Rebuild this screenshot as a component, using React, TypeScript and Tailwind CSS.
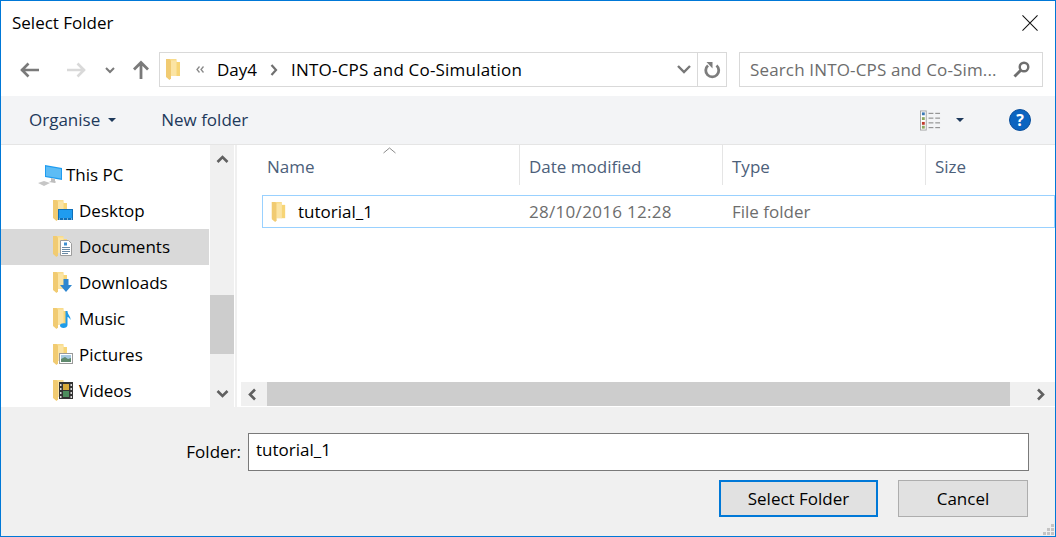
const font = { fontFamily: '"Open Sans", "Noto Sans", sans-serif' };

function Folder({ className = "w-[14px] h-[21px]" }: { className?: string }) {
  return (
    <svg viewBox="0 0 14 21" className={className}>
      <path d="M0 0h10.500v17H0z" fill="#f9dc8c" />
      <path d="M10 3h4v14h-4z" fill="#f7d576" />
      <path d="M0 0h3.500l1.500 1.500v18l-1.500 1.500-3.500-3z" fill="#f1cb72" />
      <path d="M5 1.500h5.500V17H5z" fill="#fbe4a4" />
    </svg>
  );
}

function NavArrow({ color, flip }: { color: string; flip?: boolean }) {
  return (
    <svg viewBox="0 0 20 16" className={`w-[20px] h-[16px] ${flip ? "rotate-180" : ""}`}>
      <path d="M1 8h18M8.500 1.500L2 8l6.500 6.500" fill="none" stroke={color} strokeWidth="2.600" />
    </svg>
  );
}

function Chevron({ dir, className = "" }: { dir: "up" | "down" | "left" | "right"; className?: string }) {
  const d = {
    up: "M1.500 8L6.500 3l5 5",
    down: "M1.500 4l5 5 5-5",
    left: "M9 1.500L4 6.500l5 5",
    right: "M4 1.500l5 5-5 5",
  }[dir];
  return (
    <svg viewBox="0 0 13 13" className={`w-[13px] h-[13px] ${className}`}>
      <path d={d} fill="none" stroke="#606060" strokeWidth="2.600" />
    </svg>
  );
}

function Overlay({ name }: { name: string }) {
  if (name === "Desktop")
    return (
      <svg viewBox="0 0 15 11" className="absolute left-[5px] top-[9px] w-[15px] h-[11px]">
        <rect width="15" height="11" fill="#0f6fb8" />
        <rect x="1" y="1" width="13" height="8" fill="#1f9cf0" />
        <path d="M1 10h1M5 10h1M9 10h1M13 10h1" stroke="#d5ecfb" />
      </svg>
    );
  if (name === "Documents")
    return (
      <svg viewBox="0 0 12 16" className="absolute left-[7px] top-[4px] w-[12px] h-[16px]">
        <path d="M.5.5h8l3 3v12H.5z" fill="#fff" stroke="#9d9d9d" />
        <path d="M4 2.500h3v3H4z" fill="#3d8fd1" />
        <path d="M2 7.500h8M2 9.500h8M2 11.500h8M2 13.500h6" stroke="#6a8aa5" />
      </svg>
    );
  if (name === "Downloads")
    return (
      <svg viewBox="0 0 12 13" className="absolute left-[7px] top-[7px] w-[12px] h-[13px]">
        <path d="M3.500 0h5v6H12l-6 7-6-7h3.500z" fill="#2f87d0" />
      </svg>
    );
  if (name === "Music")
    return (
      <svg viewBox="0 0 11 17" className="absolute left-[7px] top-[3px] w-[11px] h-[17px]">
        <path d="M5.500 0h2c0 4 3.500 5 3 9-1-2-2-3-3-3v8c0 2-2 3-4 3-2 0-3.500-1-3.500-2.500C0 12.500 3 12 5.500 12.500z" fill="#1e9be8" />
      </svg>
    );
  if (name === "Pictures")
    return (
      <svg viewBox="0 0 14 11" className="absolute left-[6px] top-[9px] w-[14px] h-[11px]">
        <rect x=".5" y=".5" width="13" height="10" fill="#fff" stroke="#9a9a9a" />
        <rect x="2" y="2" width="10" height="4" fill="#a6c9e0" />
        <path d="M2 6l4-2 3 2 3-1v4H2z" fill="#5f8a6d" />
      </svg>
    );
  return (
    <svg viewBox="0 0 14 17" className="absolute left-[6px] top-[2px] w-[14px] h-[17px]">
      <rect width="14" height="17" fill="#333" />
      <path d="M1 2h1.500v2H1zM1 6h1.500v2H1zM1 10h1.500v2H1zM1 14h1.500v2H1zM11.500 2H13v2h-1.500zM11.500 6H13v2h-1.500zM11.500 10H13v2h-1.500zM11.500 14H13v2h-1.500z" fill="#d8d8d8" />
      <rect x="4" y="2" width="6" height="6" fill="#d7a93a" />
      <rect x="4" y="9" width="6" height="6" fill="#4c8d5d" />
    </svg>
  );
}

const places = ["Desktop", "Documents", "Downloads", "Music", "Pictures", "Videos"];

const columns = [
  { label: "Name", width: "w-[280px]", pad: "pl-[27px]" },
  { label: "Date modified", width: "w-[203px]", pad: "pl-[9px]" },
  { label: "Type", width: "w-[203px]", pad: "pl-[9px]" },
  { label: "Size", width: "flex-1", pad: "pl-[9px]" },
];

export default function App() {
  return (
    <div style={font} className="relative w-[1056px] h-[537px] flex flex-col overflow-hidden border border-[#0078d7] bg-white text-[17px] leading-[22px] text-black">
      {/* title bar */}
      <div className="h-[51px] shrink-0 flex items-start justify-between pl-[11px] pr-[17px] pt-[11px]">
        <span>Select Folder</span>
        <svg viewBox="0 0 17 17" className="w-[16px] h-[16px] mt-[3px]">
          <path d="M.5.5l16 16M16.500.5l-16 16" stroke="#111" strokeWidth="1.100" />
        </svg>
      </div>

      {/* address row */}
      <div className="h-[35px] shrink-0 flex items-center">
        <div className="w-[158px] shrink-0 flex items-center pl-[19px]">
          <NavArrow color="#7a7a7a" />
          <div className="w-[26px]" />
          <NavArrow color="#d9d9d9" flip />
          <svg viewBox="0 0 10 7" className="w-[10px] h-[7px] ml-[19px] mt-[1px]">
            <path d="M1 1l4 4 4-4" fill="none" stroke="#7a7a7a" strokeWidth="2" />
          </svg>
          <svg viewBox="0 0 18 20" className="w-[18px] h-[20px] ml-[17px]">
            <path d="M9 19V3M2 9.500L9 2.500l7 7" fill="none" stroke="#7a7a7a" strokeWidth="2.800" />
          </svg>
        </div>
        <div className="w-[568px] h-[35px] shrink-0 flex items-center border border-[#d9d9d9]">
          <Folder className="ml-[6px] w-[14px] h-[21px]" />
          <svg viewBox="0 0 8 7" className="ml-[16px] w-[8px] h-[7px]">
            <path d="M3.500.5L1 3.500l2.500 3M7.500.5L5 3.500l2.500 3" fill="none" stroke="#8a8a8a" strokeWidth="1.300" />
          </svg>
          <span className="ml-[13px]">Day4</span>
          <svg viewBox="0 0 8 12" className="w-[8px] h-[12px] ml-[13px]">
            <path d="M1.500 1l4.500 5-4.500 5" fill="none" stroke="#707070" strokeWidth="2.200" />
          </svg>
          <span className="ml-[13px] tracking-[0.2px]">INTO-CPS and Co-Simulation</span>
          <svg viewBox="0 0 14 9" className="w-[14px] h-[9px] ml-auto mr-[6px]">
            <path d="M1 1l6 6 6-6" fill="none" stroke="#777" strokeWidth="2.400" />
          </svg>
          <div className="w-[29px] h-full flex items-center justify-center border-l border-[#d9d9d9]">
            <svg viewBox="0 0 17 18" className="w-[17px] h-[18px]">
              <path d="M12.500 4.500A6.500 6.500 0 1 1 4 4.500" fill="none" stroke="#7d7d7d" strokeWidth="2.800" />
              <path d="M2.500 1h6v6.500z" fill="#7d7d7d" />
            </svg>
          </div>
        </div>
        <div className="ml-[12px] w-[304px] h-[35px] flex items-center justify-between border border-[#d9d9d9] pl-[10px] pr-[12px] text-[#6d6d6d]">
          <span className="tracking-[0.15px] whitespace-nowrap">Search INTO-CPS and Co-Sim...</span>
          <svg viewBox="0 0 17 17" className="w-[17px] h-[17px] shrink-0">
            <circle cx="11" cy="6" r="4.300" fill="none" stroke="#6e6e6e" strokeWidth="2.400" />
            <path d="M7.500 9.500L1.500 15.500" stroke="#6e6e6e" strokeWidth="3" />
          </svg>
        </div>
      </div>

      {/* toolbar */}
      <div className="mt-[9px] h-[49px] shrink-0 flex items-center bg-[#f3f4f6] border-b border-[#e5e5e5] pl-[28px] text-[#1e395b]">
        <span>Organise</span>
        <span className="ml-[8px] w-0 h-0 border-x-[4px] border-x-transparent border-t-[4px] border-t-[#1e395b]" />
        <span className="ml-[45px]">New folder</span>
        <svg viewBox="0 0 22 21" className="ml-auto w-[21px] h-[21px]">
          <rect x=".5" y=".5" width="6" height="20" fill="#fff" stroke="#a5a5a5" />
          <path d="M2 2h3v3H2z" fill="#3a78b5" />
          <path d="M2 7h3v3H2z" fill="#8ca860" />
          <path d="M2 12h3v3H2z" fill="#c0392b" />
          <path d="M2 16h3v3H2z" fill="#8ca860" />
          <path d="M9 3h5M16 3h5M9 8h5M16 8h5M9 13h5M16 13h5M9 18h5M16 18h5" stroke="#7d7d7d" />
        </svg>
        <span className="ml-[15px] w-0 h-0 border-x-[4px] border-x-transparent border-t-[4px] border-t-[#1e395b]" />
        <span className="ml-[45px] mr-[24px] w-[22px] h-[22px] rounded-full bg-[#0b64c0] border border-[#0a4f9c] flex items-center justify-center text-white text-[16px] font-bold">?</span>
      </div>

      {/* main */}
      <div className="h-[262px] shrink-0 flex">
        <div className="w-[208px] shrink-0 overflow-hidden pt-[12px]">
          <div className="h-[36px] flex items-center pl-[37px]">
            <svg viewBox="0 0 24 21" className="w-[24px] h-[21px]">
              <path d="M7 0l17 3v12L7 12z" fill="#1f9cf0" />
              <path d="M8 1.500l15 2.500v9.500L8 11z" fill="#5dbcf5" />
              <path d="M13 13v3l-2 1 6 1 1-1-1-1v-2z" fill="#bdbdbd" />
              <path d="M0 18l6-2 6 2-6 3z" fill="#c6c6c6" />
            </svg>
            <span className="ml-[4px]">This PC</span>
          </div>
          {places.map((name) => (
            <div key={name} className={`h-[36px] flex items-center pl-[52px] ${name === "Documents" ? "bg-[#d9d9d9]" : ""}`}>
              <div className="relative w-[22px] h-[22px] shrink-0">
                <Folder />
                <Overlay name={name} />
              </div>
              <span className="ml-[4px]">{name}</span>
            </div>
          ))}
        </div>

        <div className="ml-px w-[24px] shrink-0 flex flex-col items-center bg-[#f0f0f0]">
          <Chevron dir="up" className="mt-[9px]" />
          <div className="mt-[128px] w-full h-[59px] bg-[#cdcdcd]" />
          <Chevron dir="down" className="mt-auto mb-[7px]" />
        </div>

        <div className="ml-px w-[2px] shrink-0 bg-[#f0f0f0]" />

        <div className="flex-1 min-w-0 flex flex-col pl-[3px]">
          <div className="relative h-[40px] shrink-0 flex text-[#4c607a]">
            <svg viewBox="0 0 13 7" className="absolute left-[143px] top-[2px] w-[13px] h-[7px]">
              <path d="M.5 6L6.500 1l6 5" fill="none" stroke="#8a8a8a" />
            </svg>
            {columns.map((c) => (
              <div key={c.label} className={`${c.width} ${c.pad} pt-[3px] flex items-center border-r border-[#e5e5e5] last:border-r-0 shrink-0`}>
                <span>{c.label}</span>
              </div>
            ))}
          </div>
          <div className="h-[197px] shrink-0 pt-[10px] pl-[22px]">
            <div className="h-[33px] flex items-center border border-[#99d1ff] text-[#6d6d6d]">
              <div className="w-[256px] shrink-0 flex items-center pl-[8px]">
                <Folder className="w-[15px] h-[20px]" />
                <span className="ml-[12px] text-black">tutorial_1</span>
              </div>
              <span className="w-[204px] shrink-0 pl-[10px] tracking-[0.3px]">28/10/2016 12:28</span>
              <span className="pl-[9px]">File folder</span>
            </div>
          </div>
          <div className="h-[24px] shrink-0 ml-px flex items-center bg-[#f0f0f0]">
            <Chevron dir="left" className="ml-[5px]" />
            <div className="ml-[8px] w-[743px] h-full bg-[#cdcdcd]" />
            <Chevron dir="right" className="ml-[24px]" />
          </div>
        </div>
      </div>

      {/* footer */}
      <div className="flex-1 relative flex flex-col bg-[#f0f0f0] pr-[26px]">
        <div className="mt-[26px] flex items-center justify-end">
          <span>Folder:</span>
          <div className="ml-[7px] w-[781px] h-[38px] flex items-center border border-[#7a7a7a] bg-white pl-[7px] pb-[4px]">tutorial_1</div>
        </div>
        <div className="mt-[9px] mr-px flex justify-end gap-[20px]">
          <button className="w-[159px] h-[37px] bg-[#e1e1e1] border-2 border-[#0078d7]">Select Folder</button>
          <button className="w-[130px] h-[37px] bg-[#e1e1e1] border border-[#adadad]">Cancel</button>
        </div>
        <svg viewBox="0 0 11 11" className="absolute right-[1px] bottom-[1px] w-[11px] h-[11px]">
          <path d="M8 0h3v3H8zM4 4h3v3H4zM8 4h3v3H8zM0 8h3v3H0zM4 8h3v3H4zM8 8h3v3H8z" fill="#c4c4c4" />
        </svg>
      </div>
    </div>
  );
}
